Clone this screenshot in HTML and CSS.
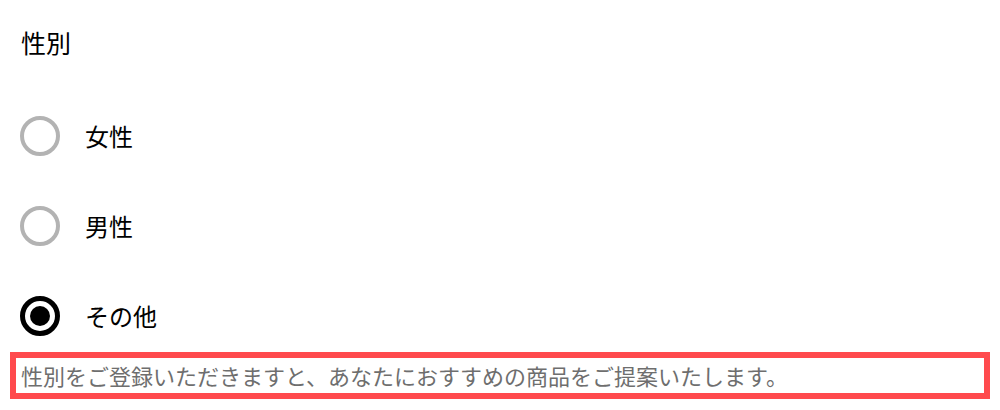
FILE: index.html
```html
<!DOCTYPE html>
<html lang="ja">
<head>
<meta charset="utf-8">
<title>性別</title>
<link rel="stylesheet" href="styles.css">
</head>
<body>
<div class="field">
  <div class="field-label">性別</div>
  <div class="options">
    <label class="option"><span class="radio"></span><span class="option-text">女性</span></label>
    <label class="option"><span class="radio"></span><span class="option-text">男性</span></label>
    <label class="option"><span class="radio checked"></span><span class="option-text">その他</span></label>
  </div>
  <p class="help">性別をご登録いただきますと、あなたにおすすめの商品をご提案いたします。</p>
</div>
</body>
</html>
```

FILE: styles.css
```css
html, body {
  margin: 0;
  padding: 0;
  background: #ffffff;
}

body {
  font-family: "Noto Sans CJK JP", "Noto Sans", sans-serif;
  color: #000000;
}

.field {
  padding-top: 24px;
}

.field-label {
  font-size: 25px;
  line-height: 36px;
  padding-left: 21px;
}

.options {
  display: flex;
  flex-direction: column;
  gap: 50px;
  margin-top: 56px;
  padding-left: 20px;
}

.option {
  display: flex;
  align-items: center;
  gap: 25px;
  height: 40px;
}

.radio {
  box-sizing: border-box;
  width: 40px;
  height: 40px;
  border: 4px solid #b3b3b3;
  border-radius: 50%;
  display: flex;
  align-items: center;
  justify-content: center;
  flex: none;
}

.radio.checked {
  border: 5px solid #000000;
}

.radio.checked::after {
  content: "";
  width: 20px;
  height: 20px;
  border-radius: 50%;
  background: #000000;
}

.option-text {
  font-size: 24px;
  line-height: 40px;
}

.help {
  margin: 16px 10px 0 10px;
  border: 6px solid #ff4a4d;
  padding: 0 0 0 5px;
  font-size: 22px;
  line-height: 35px;
  color: #6e6e6e;
}
```
